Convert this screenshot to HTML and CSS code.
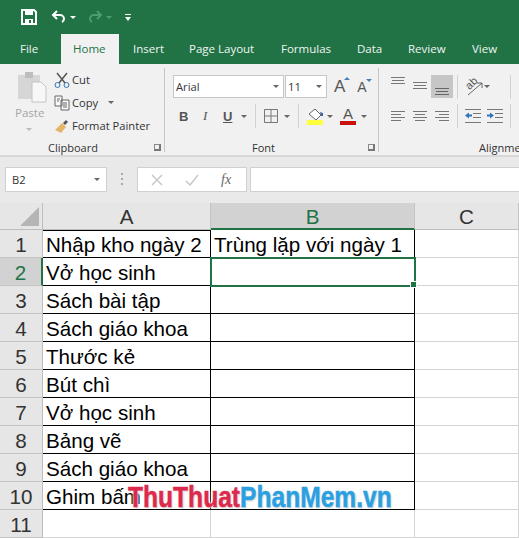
FILE: index.html
```html
<!DOCTYPE html>
<html lang="en">
<head>
    <meta charset="UTF-8">
    <title>Excel</title>
    <link rel="stylesheet" href="styles.css">
</head>
<body>
    <div class="titlebar">
        <svg class="qat-icon" width="16" height="16" viewBox="0 0 16 16"><path d="M1 1h12l2 2v12H1z" fill="none" stroke="#fff" stroke-width="2"/><rect x="4" y="2" width="8" height="4" fill="#fff"/><rect x="4" y="10" width="8" height="4" fill="#fff"/><rect x="8" y="11" width="2" height="3" fill="#217346"/></svg>
        <svg class="qat-icon undo" width="16" height="14" viewBox="0 0 16 14"><path d="M6 1L2 5l4 4M2 5h7a4 4 0 0 1 4 4 3.500 3.500 0 0 1-2 3" fill="none" stroke="#fff" stroke-width="2"/></svg>
        <span class="qat-arrow"></span>
        <svg class="qat-icon redo" width="16" height="14" viewBox="0 0 16 14"><path d="M10 1l4 4-4 4M14 5H7a4 4 0 0 0-4 4 3.500 3.500 0 0 0 2 3" fill="none" stroke="#4f9a72" stroke-width="2"/></svg>
        <span class="qat-arrow dim"></span>
        <svg class="qat-custom" width="6" height="7" viewBox="0 0 6 7"><path d="M0 0h6v1H0zM0 3h6L3 7z" fill="#fff"/></svg>
    </div>
    <div class="tabs">
        <span class="tab tab-file">File</span>
        <span class="tab tab-active">Home</span>
        <span class="tab tab-insert">Insert</span>
        <span class="tab tab-layout">Page Layout</span>
        <span class="tab tab-formulas">Formulas</span>
        <span class="tab tab-data">Data</span>
        <span class="tab tab-review">Review</span>
        <span class="tab">View</span>
    </div>

    <div class="ribbon">
        <section class="group group-clipboard">
            <div class="group-body clipboard-body">
                <div class="paste">
                    <svg width="30" height="32" viewBox="0 0 30 32"><rect x="1" y="4" width="22" height="24" fill="#d6d6d6"/><rect x="8" y="1" width="8" height="6" fill="#bdbdbd"/><path d="M15 11h9l5 5v15H15z" fill="#f7f7f7" stroke="#c4c4c4"/></svg>
                    <span class="paste-label">Paste</span>
                    <span class="arrow pale"></span>
                </div>
                <div class="clip-list">
                    <div class="clip-row">
                        <svg width="16" height="16" viewBox="0 0 16 16"><path d="M3 1l8 10M13 1L5 11" stroke="#555" stroke-width="1.500" fill="none"/><circle cx="3.500" cy="13" r="2.500" fill="none" stroke="#2e75b6"/><circle cx="12.500" cy="13" r="2.500" fill="none" stroke="#2e75b6"/></svg>
                        <span>Cut</span>
                    </div>
                    <div class="clip-row">
                        <svg width="16" height="16" viewBox="0 0 16 16"><path d="M1 1h7v10H1zM7 5h8v10H7z" fill="#f8f8f8" stroke="#666"/><path d="M9 8h4M9 10h4M9 12h4M3 4h3M3 6h2" stroke="#666"/></svg>
                        <span>Copy</span>
                        <span class="arrow copy-arrow"></span>
                    </div>
                    <div class="clip-row">
                        <svg width="16" height="16" viewBox="0 0 16 16"><path d="M1 12l7-7 4 4-5 6z" fill="#e3b66a"/><path d="M9 5l3-3 2 2-3 3z" fill="#555"/></svg>
                        <span>Format Painter</span>
                    </div>
                </div>
            </div>
            <div class="group-label label-clipboard">Clipboard<span class="launcher"></span></div>
        </section>

        <section class="group group-font">
            <div class="group-body font-body">
                <div class="font-row">
                    <div class="combo combo-name">Arial<span class="arrow"></span></div>
                    <div class="combo combo-size">11<span class="arrow"></span></div>
                    <span class="grow-a">A<i class="tri-up"></i></span>
                    <span class="shrink-a">A<i class="tri-down"></i></span>
                </div>
                <div class="font-row style-row">
                    <b class="style-btn">B</b>
                    <i class="style-btn italic">I</i>
                    <u class="style-btn under">U</u>
                    <span class="arrow"></span>
                    <span class="vsep"></span>
                    <svg class="border-icon" width="14" height="14" viewBox="0 0 14 14"><path d="M.5.500h13v13H.500zM7 .500v13M.5 7h13" fill="none" stroke="#777"/></svg>
                    <span class="arrow"></span>
                    <span class="vsep"></span>
                    <svg class="fill-icon" width="18" height="18" viewBox="0 0 18 18"><path d="M2 7l6-5 6 6-5 5z" fill="#fff" stroke="#666"/><path d="M13 5l3 1v3h-2z" fill="#44639e"/><rect x="0" y="13" width="16" height="5" fill="#ffff3c"/></svg>
                    <span class="arrow"></span>
                    <span class="color-a">A</span>
                    <span class="arrow"></span>
                </div>
            </div>
            <div class="group-label label-font">Font<span class="launcher"></span></div>
        </section>

        <section class="group group-align">
            <div class="group-body align-body">
                <div class="align-row">
                    <svg class="line-icon line-top" width="14" height="10" viewBox="0 0 14 10"><path d="M0 .500h14M1 3.500h12M0 6.500h14" stroke="#777"/></svg>
                    <svg class="line-icon line-mid" width="14" height="10" viewBox="0 0 14 10"><path d="M0 1.500h14M1 4.500h12M0 7.500h14" stroke="#777"/></svg>
                    <span class="align-on"><svg width="14" height="10" viewBox="0 0 14 10"><path d="M0 3.500h14M1 6.500h12M0 9.500h14" stroke="#666"/></svg></span>
                    <span class="vsep"></span>
                    <svg class="orient-icon" width="18" height="18" viewBox="0 0 18 18"><path d="M3 17L17 5M17 5v5M17 5h-5" fill="none" stroke="#666"/></svg>
                    <span class="orient-text">ab</span>
                    <span class="arrow"></span>
                    <span class="vsep push"></span>
                </div>
                <div class="align-row">
                    <svg class="line-icon" width="14" height="10" viewBox="0 0 14 10"><path d="M0 .500h14M0 3.500h10M0 6.500h14M0 9.500h10" stroke="#777"/></svg>
                    <svg class="line-icon" width="14" height="10" viewBox="0 0 14 10"><path d="M0 .500h14M2 3.500h10M0 6.500h14M2 9.500h10" stroke="#777"/></svg>
                    <svg class="line-icon" width="14" height="10" viewBox="0 0 14 10"><path d="M0 .500h14M4 3.500h10M0 6.500h14M4 9.500h10" stroke="#777"/></svg>
                    <span class="vsep"></span>
                    <svg class="indent-icon" width="16" height="14" viewBox="0 0 16 14"><path d="M0 .500h16M8 4.500h8M8 8.500h8M0 13.500h16" stroke="#777"/><path d="M0 6.500l4-3v2h3v2H4v2z" fill="#2e75b6"/></svg>
                    <svg class="indent-icon" width="16" height="14" viewBox="0 0 16 14"><path d="M0 .500h16M8 4.500h8M8 8.500h8M0 13.500h16" stroke="#777"/><path d="M7 6.500l-4-3v2H0v2h3v2z" fill="#2e75b6"/></svg>
                    <span class="vsep"></span>
                </div>
            </div>
            <div class="group-label align-label">Alignment</div>
        </section>
    </div>

    <div class="formula-bar">
        <div class="name-box">B2<span class="arrow"></span></div>
        <span class="grip"></span>
        <div class="fx-box">
            <svg width="12" height="12" viewBox="0 0 12 12"><path d="M1 1l10 10M11 1L1 11" stroke="#c8c8c8" stroke-width="1.500"/></svg>
            <svg width="14" height="12" viewBox="0 0 14 12"><path d="M1 7l4 4 8-10" fill="none" stroke="#c8c8c8" stroke-width="1.500"/></svg>
            <em class="fx">fx</em>
        </div>
        <div class="formula-input"></div>
    </div>

    <div class="sheet">
        <div class="corner"><span class="corner-tri"></span></div>
        <div class="col-head">A</div>
        <div class="col-head col-on">B</div>
        <div class="col-head">C</div>

        <div class="row-head">1</div>
        <div class="cell ink top">Nhập kho ngày 2</div>
        <div class="cell ink">Trùng lặp với ngày 1</div>
        <div class="cell"></div>

        <div class="row-head row-on">2</div>
        <div class="cell ink">Vở học sinh</div>
        <div class="cell ink current"><span class="handle"></span></div>
        <div class="cell"></div>

        <div class="row-head">3</div>
        <div class="cell ink">Sách bài tập</div>
        <div class="cell ink"></div>
        <div class="cell"></div>

        <div class="row-head">4</div>
        <div class="cell ink">Sách giáo khoa</div>
        <div class="cell ink"></div>
        <div class="cell"></div>

        <div class="row-head">5</div>
        <div class="cell ink">Thước kẻ</div>
        <div class="cell ink"></div>
        <div class="cell"></div>

        <div class="row-head">6</div>
        <div class="cell ink">Bút chì</div>
        <div class="cell ink"></div>
        <div class="cell"></div>

        <div class="row-head">7</div>
        <div class="cell ink">Vở học sinh</div>
        <div class="cell ink"></div>
        <div class="cell"></div>

        <div class="row-head">8</div>
        <div class="cell ink">Bảng vẽ</div>
        <div class="cell ink"></div>
        <div class="cell"></div>

        <div class="row-head">9</div>
        <div class="cell ink">Sách giáo khoa</div>
        <div class="cell ink"></div>
        <div class="cell"></div>

        <div class="row-head">10</div>
        <div class="cell ink">Ghim bấm</div>
        <div class="cell ink"></div>
        <div class="cell"></div>

        <div class="row-head">11</div>
        <div class="cell"></div>
        <div class="cell"></div>
        <div class="cell"></div>

        <div class="watermark"><span class="wm-red">ThuThuat</span><span class="wm-blue">PhanMem.vn</span></div>
    </div>
</body>
</html>
```

FILE: styles.css
```css
html, body {
    margin: 0;
    height: 538px;
    overflow: hidden;
}
body {
    background: #fff;
    color: #333;
    font-family: "Open Sans", "Noto Sans", sans-serif;
    font-size: 11.200px;
}
svg {
    display: block;
    flex: none;
}

/* title bar and tabs */
.titlebar {
    height: 34px;
    background: #217346;
    display: flex;
    align-items: center;
    padding-left: 21px;
    box-sizing: border-box;
}
.qat-icon.undo {
    margin-left: 14px;
}
.qat-icon.redo {
    margin-left: 11px;
}
.qat-arrow {
    width: 0;
    height: 0;
    margin-left: 3px;
    border: 3px solid transparent;
    border-top: 3px solid #fff;
    border-bottom: 0;
}
.qat-arrow.dim {
    border-top-color: #4f9a72;
}
.qat-custom {
    margin-left: 13px;
}
.tabs {
    height: 30px;
    background: #217346;
    display: flex;
    color: #f0f5f2;
}
.tab {
    padding-top: 6px;
    font-size: 11.500px;
    line-height: 18px;
}
.tab-file {
    margin-left: 20px;
    width: 41px;
}
.tab-active {
    width: 58px;
    box-sizing: border-box;
    padding-left: 12px;
    background: #f1f1f1;
    color: #217346;
}
.tab-insert {
    margin-left: 14px;
    width: 56px;
}
.tab-layout {
    width: 92px;
}
.tab-formulas {
    width: 76px;
}
.tab-data {
    width: 51px;
}
.tab-review {
    width: 64px;
}

/* ribbon */
.ribbon {
    height: 91px;
    background: #f1f1f1;
    border-bottom: 2px solid #d8d8d8;
    display: flex;
    overflow: hidden;
}
.group {
    box-sizing: border-box;
    height: 84px;
    margin-top: 4px;
    display: flex;
    flex-direction: column;
    border-right: 1px solid #c6c6c6;
    flex: none;
}
.group-body {
    flex: 1;
    min-height: 0;
}
.group-label {
    height: 12px;
    line-height: 16px;
    text-align: center;
    font-size: 11px;
    position: relative;
}
.label-clipboard {
    padding-right: 18px;
}
.label-font {
    padding-right: 16px;
}
.launcher {
    position: absolute;
    right: 3px;
    top: 4px;
    width: 4px;
    height: 4px;
    border-left: 1px solid #888;
    border-top: 1px solid #888;
    border-right: 2px solid #777;
    border-bottom: 2px solid #777;
}
.arrow {
    display: inline-block;
    flex: none;
    width: 0;
    height: 0;
    border: 3px solid transparent;
    border-top: 3px solid #666;
    border-bottom: 0;
}
.arrow.pale {
    border-top-color: #bbb;
}
.group-clipboard {
    width: 165px;
}
.clipboard-body {
    display: flex;
    padding-left: 17px;
}
.paste {
    width: 37px;
    padding-top: 3px;
    display: flex;
    flex-direction: column;
    align-items: flex-start;
    color: #a6a6a6;
}
.paste-label {
    margin-top: 2px;
    font-size: 11.500px;
    line-height: 16px;
    margin-left: -2px;
}
.paste .arrow {
    margin: 7px 0 0 9px;
}
.clip-list {
    display: flex;
    flex-direction: column;
}
.clip-row {
    height: 23px;
    display: flex;
    align-items: center;
    gap: 2px;
    white-space: nowrap;
}
.copy-arrow {
    margin-left: 8px;
}
.group-font {
    width: 214px;
}
.font-body {
    padding: 7px 0 0 8px;
}
.font-row {
    display: flex;
    align-items: center;
    height: 23px;
}
.combo {
    box-sizing: border-box;
    height: 23px;
    background: #fff;
    border: 1px solid #c6c6c6;
    display: flex;
    align-items: center;
    justify-content: space-between;
    padding: 0 4px 0 2px;
}
.combo-name {
    width: 111px;
    margin-right: 1px;
}
.combo-size {
    width: 42px;
}
.grow-a, .shrink-a {
    position: relative;
    font-family: "Liberation Sans", sans-serif;
    color: #555;
    line-height: 1;
}
.grow-a {
    font-size: 17px;
    margin-left: 7px;
}
.shrink-a {
    font-size: 14px;
    margin-left: 12px;
}
.tri-up, .tri-down {
    position: absolute;
    top: -1px;
    right: -5px;
    border: 3px solid transparent;
}
.tri-up {
    border-bottom: 3px solid #4a7ebb;
    border-top: 0;
}
.tri-down {
    border-top: 3px solid #4a7ebb;
    border-bottom: 0;
}
.style-row {
    margin-top: 5px;
    padding-left: 6px;
    height: 26px;
}
.style-btn {
    width: 22px;
    font-family: "Liberation Sans", sans-serif;
    font-size: 13px;
    color: #555;
}
.italic {
    font-family: "Liberation Serif", serif;
    padding-left: 2px;
    width: 20px;
}
.under {
    font-weight: bold;
    width: 18px;
}
.vsep {
    width: 1px;
    height: 24px;
    background: #d2d2d2;
    flex: none;
}
.style-row .vsep {
    margin: 0 8px;
}
.border-icon {
    margin-right: 6px;
}
.fill-icon {
    margin-right: 2px;
}
.color-a {
    width: 16px;
    margin: 0 5px 0 7px;
    font-family: "Liberation Sans", sans-serif;
    font-size: 15px;
    line-height: 14px;
    text-align: center;
    color: #555;
    border-bottom: 4px solid #cc1010;
}
.group-align {
    width: 140px;
    border-right: 0;
}
.align-body {
    padding: 7px 0 0 12px;
}
.align-row {
    position: relative;
    display: flex;
    align-items: center;
    height: 23px;
    width: 132px;
}
.align-row + .align-row {
    margin-top: 5px;
    height: 26px;
}
.line-icon {
    margin-right: 8px;
}
.line-top {
    margin-bottom: 10px;
}
.line-mid {
    margin-bottom: 2px;
}
.align-on {
    width: 22px;
    height: 23px;
    background: #c6c6c6;
    display: flex;
    align-items: flex-end;
    justify-content: center;
    padding-bottom: 3px;
    box-sizing: border-box;
    margin-left: -4px;
    margin-right: 4px;
}
.orient-icon {
    margin: 0 1px 0 7px;
}
.orient-text {
    position: absolute;
    left: 74px;
    top: 2px;
    font-family: "Liberation Sans", sans-serif;
    font-size: 11px;
    line-height: 12px;
    color: #555;
    transform: rotate(-45deg);
}
.push {
    margin-left: 20px;
}
.indent-icon {
    margin-left: 7px;
    margin-right: -1px;
}
.align-row .indent-icon + .vsep {
    margin-left: 8px;
}
.align-label {
    text-align: left;
    padding-left: 100px;
    white-space: nowrap;
}

/* name box and formula input */
.formula-bar {
    height: 46px;
    box-sizing: border-box;
    background: #e9e9e9;
    display: flex;
    align-items: flex-start;
    padding: 10px 0 0 5px;
}
.name-box {
    box-sizing: border-box;
    width: 102px;
    height: 25px;
    background: #fff;
    border: 1px solid #d0d0d0;
    display: flex;
    align-items: center;
    justify-content: space-between;
    padding: 0 6px;
}
.grip {
    width: 2px;
    height: 13px;
    margin: 6px 14px 0 14px;
    background: repeating-linear-gradient(#aaa 0 2px, transparent 2px 5px);
}
.fx-box {
    box-sizing: border-box;
    width: 110px;
    height: 25px;
    background: #fff;
    border: 1px solid #d0d0d0;
    display: flex;
    align-items: center;
    gap: 22px;
    padding-left: 13px;
    margin-right: 3px;
}
.fx {
    font-family: "Liberation Serif", serif;
    font-size: 14px;
    color: #666;
}
.formula-input {
    flex: 1;
    height: 25px;
    box-sizing: border-box;
    background: #fff;
    border: 1px solid #d0d0d0;
    border-right: 0;
}

/* worksheet */
.sheet {
    position: relative;
    display: grid;
    grid-template-columns: 43px 168px 204px 104px;
    grid-template-rows: 27px repeat(11, 28px);
    font-family: "Liberation Sans", sans-serif;
    font-size: 20.600px;
    color: #000;
}
.corner {
    background: #e6e6e6;
    border-right: 1px solid #bdbdbd;
    border-bottom: 1px solid #bdbdbd;
    display: flex;
    align-items: flex-end;
    justify-content: flex-end;
    padding: 0 3px 3px 0;
}
.corner-tri {
    width: 0;
    height: 0;
    border-left: 19px solid transparent;
    border-bottom: 19px solid #b5b5b5;
}
.col-head {
    background: #e6e6e6;
    border-right: 1px solid #c4c4c4;
    border-bottom: 1px solid #bdbdbd;
    text-align: center;
    line-height: 27px;
    color: #333;
}
.col-on {
    background: #d2d2d2;
    color: #217346;
    border-bottom: 2px solid #217346;
}
.row-head {
    background: #e6e6e6;
    border-right: 1px solid #bdbdbd;
    border-bottom: 1px solid #c4c4c4;
    text-align: center;
    line-height: 29px;
    color: #333;
}
.row-on {
    background: #d2d2d2;
    color: #217346;
    border-right: 2px solid #217346;
}
.cell {
    border-right: 1px solid #d4d4d4;
    border-bottom: 1px solid #d4d4d4;
    padding-left: 3px;
    line-height: 29px;
    white-space: nowrap;
    position: relative;
}
.cell.ink {
    border-right-color: #000;
    border-bottom-color: #000;
}
.cell.top {
    box-shadow: inset 0 1px 0 #000;
}
.cell.current {
    outline: 2px solid #217346;
    outline-offset: -1px;
    z-index: 1;
}
.handle {
    position: absolute;
    right: -3px;
    bottom: -3px;
    width: 5px;
    height: 5px;
    background: #217346;
    border: 1px solid #fff;
}
.watermark {
    position: absolute;
    left: 128px;
    top: 279px;
    font-weight: bold;
    font-size: 30px;
    line-height: 30px;
    white-space: nowrap;
    transform: scaleX(0.820);
    transform-origin: left center;
    -webkit-text-stroke: 0.500px currentColor;
    text-shadow: 0 0 3px #fff, 0 0 3px #fff, 1px 1px 2px #aaa;
    z-index: 2;
}
.wm-red {
    color: #dc2a4c;
}
.wm-blue {
    color: #2b9fe0;
}
```
